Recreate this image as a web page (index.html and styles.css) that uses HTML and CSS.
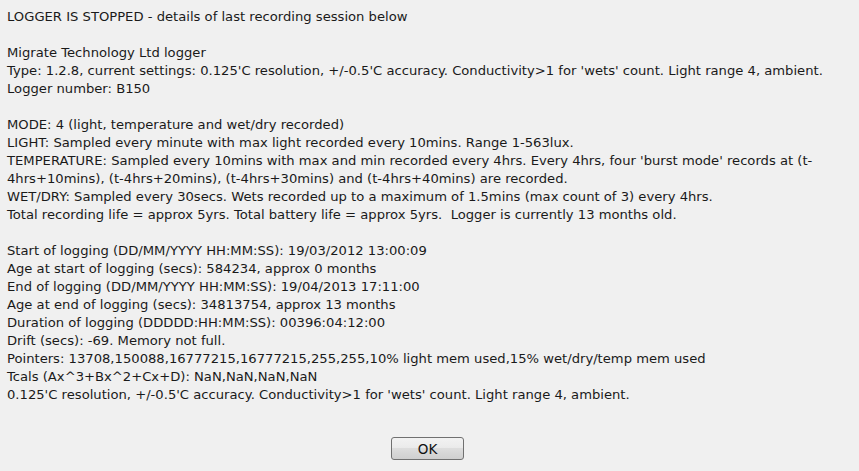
FILE: index.html
```html
<!DOCTYPE html>
<html>
<head>
<meta charset="utf-8">
<link rel="stylesheet" href="styles.css">
</head>
<body>
<div class="dialog">
  <div class="details">
    <p class="line">LOGGER IS STOPPED - details of last recording session below</p>
    <p class="line blank">&nbsp;</p>
    <p class="line">Migrate Technology Ltd logger</p>
    <p class="line">Type: 1.2.8, current settings: 0.125'C resolution, +/-0.5'C accuracy. Conductivity&gt;1 for 'wets' count. Light range 4, ambient.</p>
    <p class="line">Logger number: B150</p>
    <p class="line blank">&nbsp;</p>
    <p class="line">MODE: 4 (light, temperature and wet/dry recorded)</p>
    <p class="line">LIGHT: Sampled every minute with max light recorded every 10mins. Range 1-563lux.</p>
    <p class="line">TEMPERATURE: Sampled every 10mins with max and min recorded every 4hrs. Every 4hrs, four 'burst mode' records at (t-<br>4hrs+10mins), (t-4hrs+20mins), (t-4hrs+30mins) and (t-4hrs+40mins) are recorded.</p>
    <p class="line">WET/DRY: Sampled every 30secs. Wets recorded up to a maximum of 1.5mins (max count of 3) every 4hrs.</p>
    <p class="line">Total recording life = approx 5yrs. Total battery life = approx 5yrs.&nbsp; Logger is currently 13 months old.</p>
    <p class="line blank">&nbsp;</p>
    <p class="line">Start of logging (DD/MM/YYYY HH:MM:SS): 19/03/2012 13:00:09</p>
    <p class="line">Age at start of logging (secs): 584234, approx 0 months</p>
    <p class="line">End of logging (DD/MM/YYYY HH:MM:SS): 19/04/2013 17:11:00</p>
    <p class="line">Age at end of logging (secs): 34813754, approx 13 months</p>
    <p class="line">Duration of logging (DDDDD:HH:MM:SS): 00396:04:12:00</p>
    <p class="line">Drift (secs): -69. Memory not full.</p>
    <p class="line">Pointers: 13708,150088,16777215,16777215,255,255,10% light mem used,15% wet/dry/temp mem used</p>
    <p class="line">Tcals (Ax^3+Bx^2+Cx+D): NaN,NaN,NaN,NaN</p>
    <p class="line">0.125'C resolution, +/-0.5'C accuracy. Conductivity&gt;1 for 'wets' count. Light range 4, ambient.</p>
  </div>
  <div class="actions">
    <button class="ok-button" type="button">OK</button>
  </div>
</div>
</body>
</html>
```
FILE: styles.css
```css
html, body {
  margin: 0;
  padding: 0;
  background: #f0f0f0;
}
.dialog {
  width: 859px;
  height: 471px;
  box-sizing: border-box;
  padding: 8px 0 0 7px;
  display: flex;
  flex-direction: column;
  font-family: "DejaVu Sans", sans-serif;
  font-size: 13.15px;
  color: #1a1a1a;
}
.details {
  display: flex;
  flex-direction: column;
}
.line {
  margin: 0;
  line-height: 18px;
  white-space: nowrap;
}
.actions {
  display: flex;
  justify-content: center;
  margin-top: 33px;
  padding-right: 7px;
}
.ok-button {
  width: 73px;
  height: 23px;
  box-sizing: border-box;
  border: 1px solid #707070;
  border-radius: 3px;
  background: linear-gradient(#f2f2f2 0%, #ebebeb 45%, #dddddd 50%, #cfcfcf 100%);
  font-family: "DejaVu Sans", sans-serif;
  font-size: 13.5px;
  color: #111;
  padding: 0;
  margin-left: -4px;
}
```
